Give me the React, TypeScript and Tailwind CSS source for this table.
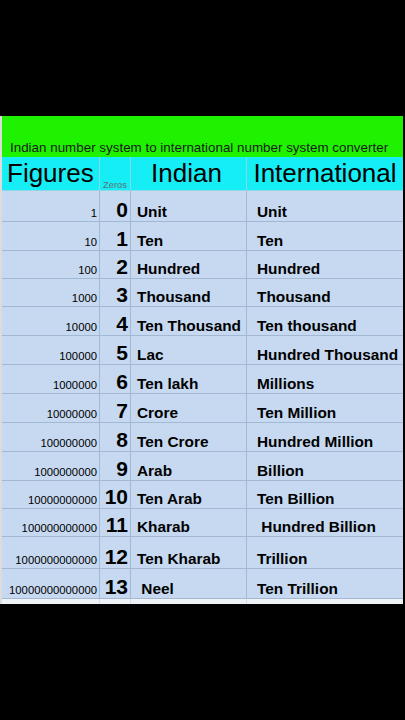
const rows = [
  { fig: "1", z: "0", ind: "Unit", intl: "Unit", h: "h-[31px]" },
  { fig: "10", z: "1", ind: "Ten", intl: "Ten", h: "h-[29px]" },
  { fig: "100", z: "2", ind: "Hundred", intl: "Hundred", h: "h-[28px]" },
  { fig: "1000", z: "3", ind: "Thousand", intl: "Thousand", h: "h-[28px]" },
  { fig: "10000", z: "4", ind: "Ten Thousand", intl: "Ten thousand", h: "h-[29px]" },
  { fig: "100000", z: "5", ind: "Lac", intl: "Hundred Thousand", h: "h-[29px]" },
  { fig: "1000000", z: "6", ind: "Ten lakh", intl: "Millions", h: "h-[29px]" },
  { fig: "10000000", z: "7", ind: "Crore", intl: "Ten Million", h: "h-[29px]" },
  { fig: "100000000", z: "8", ind: "Ten Crore", intl: "Hundred Million", h: "h-[29px]" },
  { fig: "1000000000", z: "9", ind: "Arab", intl: "Billion", h: "h-[29px]" },
  { fig: "10000000000", z: "10", ind: "Ten Arab", intl: "Ten Billion", h: "h-[28px]" },
  { fig: "100000000000", z: "11", ind: "Kharab", intl: "\u00a0Hundred Billion", h: "h-[28px]" },
  { fig: "1000000000000", z: "12", ind: "Ten Kharab", intl: "Trillion", h: "h-[32px]" },
  { fig: "10000000000000", z: "13", ind: "\u00a0Neel", intl: "Ten Trillion", h: "h-[30px]" },
];

const font = "[font-family:'Liberation_Sans',Arial,sans-serif]";

export default function App() {
  return (
    <div className={`w-[405px] h-[720px] bg-black overflow-hidden ${font}`}>
      <div className="h-[116px]" />
      <div className="w-[403px] border-l-2 border-[#dcdcdc]">
        {/* title bar */}
        <div className="h-[41px] bg-[#1ef200] flex items-end pl-2 pb-[3px]">
          <p className="text-[13.4px] leading-none text-[#1a1a1a] whitespace-nowrap">
            Indian number system to international number system converter
          </p>
        </div>

        {/* header */}
        <div className="grid grid-cols-[98px_31px_116px_156px] h-[34px] bg-[#16eef6] border-b border-[#8fd8e4]">
          <div className="border-r border-[#7fdbe6] flex items-end pl-[5px] pb-[4px]">
            <span className="text-[26px] leading-none text-black">Figures</span>
          </div>
          <div className="border-r border-[#7fdbe6] flex items-end justify-center pb-[1px]">
            <span className="text-[9.4px] leading-none text-[#5f7074]">Zeros</span>
          </div>
          <div className="border-r border-[#7fdbe6] flex items-end justify-center pb-[4px]">
            <span className="text-[26px] leading-none text-black pr-1">Indian</span>
          </div>
          <div className="flex items-end justify-center pb-[4px]">
            <span className="text-[26px] leading-none text-black whitespace-nowrap">International</span>
          </div>
        </div>

        {/* body */}
        {rows.map((r) => (
          <div
            key={r.fig}
            className={`grid grid-cols-[98px_31px_116px_156px] ${r.h} bg-[#c6d9f0] border-b border-[#a3b9d3]`}
          >
            <div className="border-r border-[#a3b9d3] flex items-end justify-end pr-[2px] pb-[2px]">
              <span className="text-[11.3px] leading-none text-black">{r.fig}</span>
            </div>
            <div className="border-r border-[#a3b9d3] flex items-end justify-end pr-[2px] pb-[1px]">
              <span className="text-[21px] font-bold leading-none text-black">{r.z}</span>
            </div>
            <div className="border-r border-[#a3b9d3] flex items-end pl-[6px] pb-[2px]">
              <span className="text-[15.4px] font-bold leading-none text-black whitespace-nowrap">{r.ind}</span>
            </div>
            <div className="flex items-end pl-[10px] pb-[2px]">
              <span className="text-[15.4px] font-bold leading-none text-black whitespace-nowrap">{r.intl}</span>
            </div>
          </div>
        ))}

        {/* bottom strip */}
        <div className="grid grid-cols-[98px_31px_116px_156px] h-[5px] bg-[#eef2f7]">
          <div className="border-r border-[#d3dce8]" />
          <div className="border-r border-[#d3dce8]" />
          <div className="border-r border-[#d3dce8]" />
          <div />
        </div>
      </div>
    </div>
  );
}
